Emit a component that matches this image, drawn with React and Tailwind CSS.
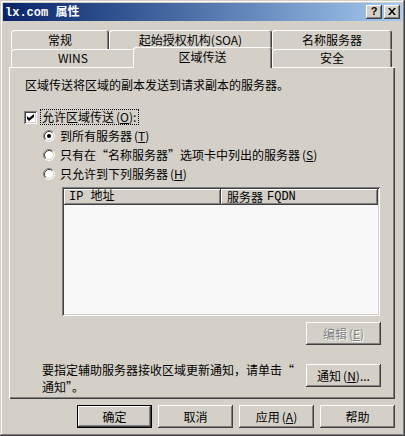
import React from "react";

const raised =
  "bg-[#d4d0c8] shadow-[inset_-1px_-1px_0_#404040,inset_1px_1px_0_#ffffff,inset_-2px_-2px_0_#808080]";
const sunken =
  "shadow-[inset_1px_1px_0_#808080,inset_-1px_-1px_0_#ffffff,inset_2px_2px_0_#404040,inset_-2px_-2px_0_#d4d0c8]";
const tabEdge =
  "shadow-[inset_1px_1px_0_#ffffff,inset_-1px_0_0_#404040,inset_-2px_0_0_#808080]";

const Key = ({ k }) => (
  <span className="ml-[2px]">
    (<span className="underline underline-offset-[1px]">{k}</span>)
  </span>
);

function Tab({ w, h, children }) {
  return (
    <div
      className={`${w} ${h} ${tabEdge} rounded-t-[3px] flex items-center justify-center shrink-0`}
    >
      {children}
    </div>
  );
}

function Radio({ checked, children }) {
  return (
    <div className="flex items-center h-[19px]">
      <svg width="12" height="12" viewBox="0 0 12 12" className="shrink-0">
        <circle cx="6" cy="6" r="5" fill="#ffffff" />
        <path d="M2.11 9.89A5.5 5.5 0 0 1 9.89 2.11" stroke="#808080" fill="none" />
        <path d="M9.89 2.11A5.5 5.5 0 0 1 2.11 9.89" stroke="#ffffff" fill="none" />
        <path d="M2.82 9.18A4.5 4.5 0 0 1 9.18 2.82" stroke="#404040" fill="none" />
        <path d="M9.18 2.82A4.5 4.5 0 0 1 2.82 9.18" stroke="#d4d0c8" fill="none" />
        {checked && <circle cx="6" cy="6" r="2" fill="#000000" />}
      </svg>
      <span className="ml-[5px]">{children}</span>
    </div>
  );
}

function Button({ children, isDefault, disabled }) {
  return (
    <div
      className={`w-[75px] h-[23px] ${raised} flex items-center justify-center ${
        isDefault ? "outline outline-1 outline-black -outline-offset-1 shadow-[inset_-2px_-2px_0_#404040,inset_2px_2px_0_#ffffff,inset_-3px_-3px_0_#808080]" : ""
      } ${disabled ? "text-[#808080] [text-shadow:1px_1px_0_#ffffff]" : "text-black"}`}
    >
      {children}
    </div>
  );
}

export default function App() {
  return (
    <div className="w-[405px] h-[436px] bg-[#d4d0c8] flex flex-col text-[12px] leading-[12px] text-black font-['Noto_Sans_CJK_SC','Liberation_Sans',sans-serif] shadow-[inset_-1px_-1px_0_#404040,inset_1px_1px_0_#d4d0c8,inset_-2px_-2px_0_#808080,inset_2px_2px_0_#ffffff]">
      {/* title bar */}
      <div className="mx-[3px] mt-[3px] h-[18px] bg-linear-to-r from-[#0a246a] to-[#a6caf0] flex items-center pl-[2px] pr-[2px]">
        <span className="text-white font-bold text-[12px]">
          <span className="font-['Liberation_Mono',monospace]">lx.com </span>属性
        </span>
        <div className="ml-auto flex gap-[2px]">
          <div className={`w-[16px] h-[14px] ${raised} flex items-center justify-center`}>
            <span className="font-['Liberation_Sans',sans-serif] font-bold text-[11px] leading-[11px] -mt-[1px]">?</span>
          </div>
          <div className={`w-[16px] h-[14px] ${raised} flex items-center justify-center`}>
            <svg width="8" height="7" viewBox="0 0 8 7" className="-mt-[1px]">
              <path d="M0 0h2l2 2.5L6 0h2L5 3.5 8 7H6L4 4.5 2 7H0l3-3.5z" fill="#000000" />
            </svg>
          </div>
        </div>
      </div>

      {/* tabs */}
      <div className="flex ml-[11px] mt-[9px] h-[19px]">
        <Tab w="w-[98px]" h="h-[19px]">常规</Tab>
        <Tab w="w-[163px]" h="h-[19px]">起始授权机构(SOA)</Tab>
        <Tab w="w-[120px]" h="h-[19px]">名称服务器</Tab>
      </div>
      <div className="flex items-end ml-[11px] h-[18px]">
        <Tab w="w-[124px]" h="h-[18px]">WINS</Tab>
        <div
          className={`relative z-10 -ml-[2px] w-[139px] h-[21px] -mb-[1px] bg-[#d4d0c8] ${tabEdge} rounded-t-[3px] flex items-center justify-center pb-[1px] shrink-0`}
        >
          区域传送
        </div>
        <Tab w="w-[120px]" h="h-[18px]">安全</Tab>
      </div>

      {/* panel */}
      <div className="ml-[9px] w-[386px] h-[332px] flex flex-col pl-[15px] pt-[12px] shadow-[inset_1px_1px_0_#ffffff,inset_-1px_-1px_0_#404040,inset_-2px_-2px_0_#808080]">
        <p className="ml-[1px] h-[12px]">区域传送将区域的副本发送到请求副本的服务器。</p>

        <div className="mt-[18px] flex items-center h-[16px]">
          <div className={`w-[13px] h-[13px] bg-white ${sunken} flex items-center justify-center shrink-0`}>
            <svg width="7" height="7" viewBox="0 0 7 7">
              <path d="M0 2l2 2 5-4v3L2 7 0 5z" fill="#000000" />
            </svg>
          </div>
          <div className="ml-[3px] w-[99px] h-[16px] border border-dotted border-black flex items-center pl-[1px]">
            允许区域传送<Key k="O" />:
          </div>
        </div>

        <div className="ml-[19px] mt-[1px] flex flex-col">
          <Radio checked>
            到所有服务器<Key k="T" />
          </Radio>
          <Radio>
            只有在“名称服务器”选项卡中列出的服务器<Key k="S" />
          </Radio>
          <Radio>
            只允许到下列服务器<Key k="H" />
          </Radio>
        </div>

        {/* list view */}
        <div className={`ml-[38px] mt-[4px] w-[318px] h-[129px] bg-[#f8f8f8] ${sunken} p-[2px] flex flex-col`}>
          <div className="flex h-[16px]">
            <div className={`w-[157px] h-full ${raised} flex items-center pl-[5px] font-['Liberation_Mono','Noto_Sans_CJK_SC',monospace]`}>
              IP 地址
            </div>
            <div className={`flex-1 h-full ${raised} flex items-center pl-[6px]`}>
              服务器 <span className="ml-[4px] font-['Liberation_Mono',monospace]">FQDN</span>
            </div>
          </div>
        </div>

        <div className="mt-[6px] flex justify-end pr-[14px]">
          <Button disabled>
            编辑<Key k="E" />
          </Button>
        </div>

        <div className="mt-[19px] flex items-start pr-[14px]">
          <p className="ml-[18px] leading-[17px] -mt-[3px]">
            要指定辅助服务器接收区域更新通知，请单击“
            <br />
            通知”。
          </p>
          <div className="ml-auto">
            <Button>
              通知<Key k="N" />...
            </Button>
          </div>
        </div>
      </div>

      {/* dialog buttons */}
      <div className="mt-[6px] flex justify-end gap-[6px] pr-[10px]">
        <Button isDefault>确定</Button>
        <Button>取消</Button>
        <Button>
          应用<Key k="A" />
        </Button>
        <Button>帮助</Button>
      </div>
    </div>
  );
}
